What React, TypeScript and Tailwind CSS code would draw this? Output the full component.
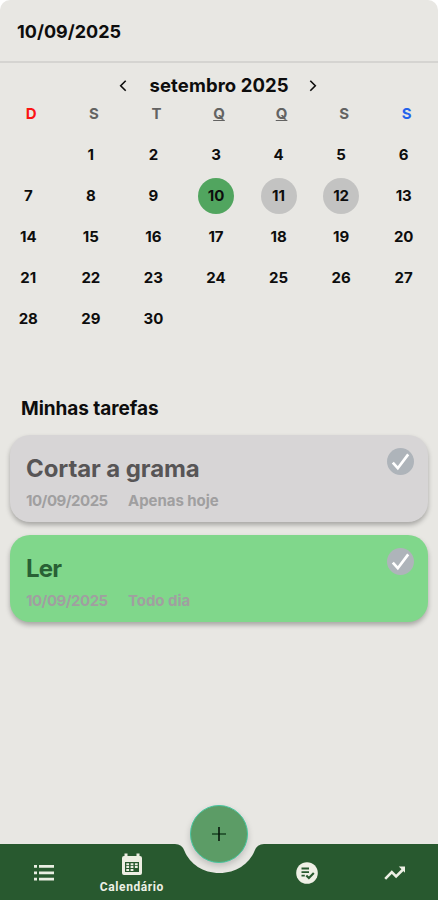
import clsx from 'clsx'

interface Task { id: number; title: string; date: string; repeat: string; green: boolean }

const weekdays = ['D', 'S', 'T', 'Q', 'Q', 'S', 'S']
const firstWeekday = 1
const cells: (number | null)[] = [
  ...Array.from({ length: firstWeekday }, () => null),
  ...Array.from({ length: 30 }, (_, i) => i + 1),
]
const today = 10
const marked = [11, 12]

const tasks: Task[] = [
  { id: 1, title: 'Cortar a grama', date: '10/09/2025', repeat: 'Apenas hoje', green: false },
  { id: 2, title: 'Ler', date: '10/09/2025', repeat: 'Todo dia', green: true },
]

function Chevron({ d }: { d: string }) {
  return (
    <svg width="8" height="12" viewBox="0 0 8 12" fill="none" stroke="#0d0d0d" strokeWidth="1.6">
      <path d={d} />
    </svg>
  )
}

function Calendar() {
  return (
    <section className="h-[336px]">
      <div className="flex h-[41px] items-center justify-center gap-[21px] pr-0.5 pt-1">
        <Chevron d="M6.7.7 1.7 5.7l5 5" />
        <h2 className="w-[140px] whitespace-nowrap pl-[1.5px] text-[18.5px] font-bold tracking-[0.1px]">setembro 2025</h2>
        <Chevron d="m1.3.7 5 5-5 5" />
      </div>
      <div className="grid h-5 grid-cols-7 items-center text-center text-[15px] font-bold text-[#636362]">
        {weekdays.map((w, i) => (
          <span key={i} className={clsx('leading-5', i === 0 && 'text-[#fb1414]', i === 6 && 'text-[#2463eb]', w === 'Q' && 'underline decoration-1 underline-offset-1')}>{w}</span>
        ))}
      </div>
      <div className="-ml-[3px] mr-[3px] mt-[10px] grid auto-rows-[41px] grid-cols-7">
        {cells.map((d, i) => (
          <div key={i} className="flex items-center justify-center">
            <span className={clsx('flex size-9 items-center justify-center rounded-full pt-0.5 text-[15px] font-bold',
              d === today && 'bg-[#51a55f]', d !== null && marked.includes(d) && 'bg-[#c3c3c2]')}>
              {d}
            </span>
          </div>
        ))}
      </div>
    </section>
  )
}

function TaskCard({ task }: { task: Task }) {
  return (
    <div className={clsx('flex h-[87px] justify-between rounded-[20px] pl-4 pr-[14px] shadow-[0_3px_5px_rgba(0,0,0,0.28)]',
      task.green ? 'bg-[#80d78b]' : 'bg-[#d7d5d6]')}>
      <div className="pt-[18px]">
        <h3 className={clsx('whitespace-nowrap text-2xl font-bold leading-8', task.green ? 'tracking-[-0.8px] text-[#296035]' : 'tracking-[-0.1px] text-[#575556]')}>{task.title}</h3>
        <div className="mt-1.5 flex text-[15px] font-bold leading-5 tracking-[-0.5px] text-[#a09fa0]">
          <span className="w-[102px]">{task.date}</span>
          <span className="tracking-[-0.05px]">{task.repeat}</span>
        </div>
      </div>
      <svg className="mt-[13px]" width="27" height="27" viewBox="0 0 27 27" fill="none">
        <circle cx="13.5" cy="13.5" r="13.5" fill="#aeb4ba" />
        <path d="m5.8 14.6 5 5.6L21.2 6.4" stroke="#fff" strokeWidth="2.7" />
      </svg>
    </div>
  )
}

function ListIcon() {
  return (
    <svg width="20" height="16" viewBox="0 0 20 16" fill="#e9eee2">
      <path d="M0 0h3v2.8H0zM5 0h15v2.8H5zM0 6.4h3v2.8H0zM5 6.4h15v2.8H5zM0 12.8h3v2.8H0zM5 12.8h15v2.8H5z" />
    </svg>
  )
}

function CalendarIcon() {
  return (
    <svg width="20" height="23" viewBox="0 0 20 23">
      <path fill="#edeee3" d="M2.5 3V.5h3V3h9V.5h3V3H18q2 0 2 2v15q0 2-2 2H2q-2 0-2-2V5q0-2 2-2z" />
      <path fill="#28592f" d="M3 9h14v10H3z" />
      <path fill="#edeee3" d="M4.3 10.3h2.8v2H4.3zM8.6 10.3h2.8v2H8.6zM12.9 10.3h2.8v2h-2.8zM4.3 13.1h2.8v2H4.3zM8.6 13.1h2.8v2H8.6zM12.9 13.1h2.8v2h-2.8zM4.3 15.9h2.8v2H4.3zM8.6 15.9h2.8v2H8.6z" />
    </svg>
  )
}

function DoneIcon() {
  return (
    <svg width="22" height="22" viewBox="0 0 22 22" fill="none" stroke="#28592f" strokeWidth="1.8">
      <circle cx="11" cy="11" r="10.8" fill="#eff0e6" stroke="none" />
      <path d="M5.5 6.5h7.5M5.5 10.2h7.5M5.5 13.7h3.3" />
      <path strokeWidth="2.1" d="m10.3 13.5 2.6 2.6 4.9-5" />
    </svg>
  )
}

function TrendIcon() {
  return (
    <svg width="22" height="14" viewBox="0 0 22 14" fill="none" stroke="#edf0e5" strokeWidth="2.6">
      <path d="m1.2 12.8 6.6-6.6 4.3 4.3 7-7" />
      <path d="M14.8.6H21v6.2z" fill="#edf0e5" stroke="none" />
    </svg>
  )
}

function BottomNav() {
  return (
    <nav className="relative h-14">
      <svg className="absolute inset-0" width="438" height="56" viewBox="0 0 438 56">
        <path fill="#28592f" d="M0 0h175q7 0 9.500 7C190 20 203 29 219.500 29S249 20 254.500 7q2.500-7 9.500-7h174v56H0z" />
      </svg>
      <div className="relative grid h-full grid-cols-5 place-items-center">
        <button aria-label="Lista" className="pt-0.5"><ListIcon /></button>
        <button className="flex flex-col items-center gap-[3px] pl-px pt-1">
          <CalendarIcon />
          <span className="font-[Roboto,sans-serif] text-xs font-bold leading-4 tracking-[0.6px] text-[#edf0e5]">Calendário</span>
        </button>
        <span />
        <button aria-label="Tarefas concluídas" className="pt-0.5"><DoneIcon /></button>
        <button aria-label="Progresso" className="pl-0.5 pt-0.5"><TrendIcon /></button>
      </div>
      <button aria-label="Adicionar" className="absolute left-[190px] top-[-39px] flex size-[58px] items-center justify-center rounded-full border border-[#47c6a0] bg-[#5c9c66] shadow-[0_3px_6px_rgba(0,0,0,0.18)]">
        <svg width="14" height="14" viewBox="0 0 14 14" strokeWidth="1.6">
          <path stroke="#1d4a27" d="M0 7h14" />
          <path stroke="#07170b" d="M7 0v14" />
        </svg>
      </button>
    </nav>
  )
}

export default function App() {
  return (
    <div className="h-[900px] w-[438px] overflow-hidden bg-white">
      <div className="flex h-full flex-col rounded-t-[10px] bg-[#e8e7e3] font-[Inter,sans-serif] text-[#0d0d0d]">
        <header className="flex h-[63px] items-center border-b-2 border-[#d5d4d1] pl-[17px]">
          <h1 className="pt-0.5 text-[18px] font-bold">10/09/2025</h1>
        </header>
        <Calendar />
        <main className="flex-1">
          <h2 className="pl-[21px] text-[19px] font-bold leading-5 tracking-[-0.05px]">Minhas tarefas</h2>
          <div className="mt-4 flex flex-col gap-[13px] px-2.5">
            {tasks.map(t => <TaskCard key={t.id} task={t} />)}
          </div>
        </main>
        <BottomNav />
      </div>
    </div>
  )
}
